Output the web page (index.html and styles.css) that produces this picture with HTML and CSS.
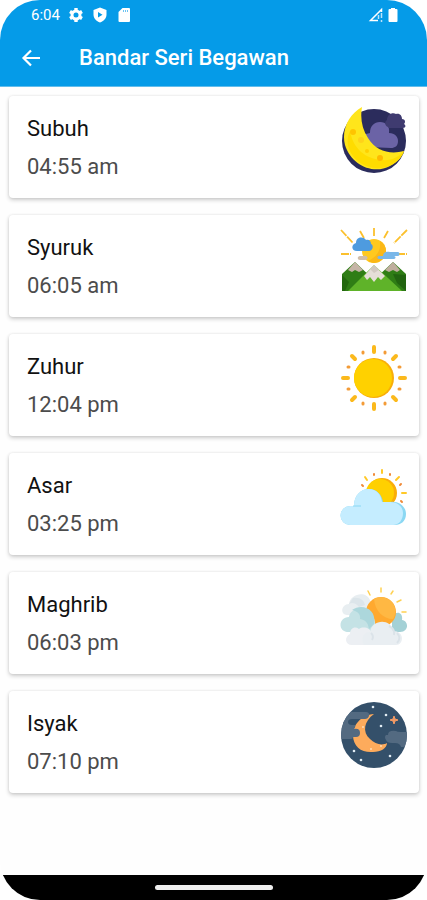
FILE: index.html
```html
<!DOCTYPE html>
<html lang="ms">
<head>
    <meta charset="utf-8">
    <meta name="viewport" content="width=device-width, initial-scale=1">
    <title>Bandar Seri Begawan</title>
    <link rel="stylesheet" href="styles.css">
</head>
<body>
    <div class="screen">
        <header class="header">
            <div class="status-bar">
                <span class="clock">6:04</span>
                <svg class="status-icon" viewBox="0 0 16 16">
                    <circle cx="8" cy="8" r="4" fill="none" stroke="#fff" stroke-width="3"/>
                    <path d="M8 1v3M8 12v3M2 4.500l2.500 1.500M11.500 10l2.500 1.500M2 11.500l2.500-1.500M11.500 6l2.500-1.500" stroke="#fff" stroke-width="3.400"/>
                </svg>
                <svg class="status-icon" viewBox="0 0 16 16">
                    <path fill="#fff" fill-rule="evenodd" d="M8 .5l6.500 2.500v4.500c0 4-3 6.800-6.500 8-3.500-1.200-6.500-4-6.500-8V3zM6 5v5.500l4.500-2.700z"/>
                </svg>
                <svg class="status-icon" viewBox="0 0 16 16">
                    <path fill="#fff" d="M6.500 1H13q1 0 1 1v12q0 1-1 1H3.500q-1 0-1-1V5z"/>
                    <path d="M7.500 3v2M9.500 3v2M11.500 3v2" stroke="#6cc3f2"/>
                </svg>
                <svg class="status-icon signal" viewBox="0 0 16 16">
                    <path d="M10 13.500H2.500L13.500 2.500V5" fill="none" stroke="#fff" stroke-width="1.500"/>
                    <path d="M13.500 6v5M13.500 13v2M10.500 8v4" stroke="#b9e2fa" stroke-width="1.500"/>
                </svg>
                <svg class="status-icon battery" viewBox="0 0 10 16">
                    <path fill="#fff" d="M3 1h4v1h1.500q1 0 1 1v11q0 1-1 1h-7q-1 0-1-1V3q0-1 1-1H3z"/>
                </svg>
            </div>
            <div class="app-bar">
                <button class="back" type="button" aria-label="Back">
                    <svg viewBox="0 0 20 20"><path d="M19 10H3M10 2.500L2.500 10l7.500 7.500" fill="none" stroke="#fff" stroke-width="2.200"/></svg>
                </button>
                <h1 class="title">Bandar Seri Begawan</h1>
            </div>
        </header>

        <main class="prayer-list">
            <section class="card">
                <div class="info">
                    <h2 class="name">Subuh</h2>
                    <p class="time">04:55 am</p>
                </div>
                <svg class="icon" viewBox="0 0 68 68">
                    <circle cx="34" cy="35" r="32" fill="#2b2c5c"/>
                    <path d="M29 41a6 6 0 0 1-3-13l4-1c0-7 4-11 10-11s10 4 9 11c6 0 9 4 9 8 0 5-3 7-7 7z" fill="#6b63a6"/>
                    <path d="M48 21c-3-1-4-5-1-7 0-5 5-8 9-6 4-1 6 2 6 5 3 0 4 3 2 5 2 1 2 4-1 4H49z" fill="#3f3b70"/>
                    <path d="M22 1C9 8 1 24 5 39c6 20 28 30 45 21 8-4 12-9 14-15-14 4-28 0-36-13-6-9-8-20-6-31z" fill="#ffe51b"/>
                    <path d="M9 43c6 16 26 24 42 16 6-3 11-8 13-14-5 6-13 10-22 9C26 53 13 43 10 25c-3 6-3 12-1 18z" fill="#ffdc00"/>
                    <circle cx="13" cy="26" r="3" fill="#ffc400"/>
                    <circle cx="21" cy="34" r="3" fill="#ffd21a"/>
                    <circle cx="40" cy="52" r="3" fill="#ffb900"/>
                    <circle cx="27" cy="45" r="2" fill="#ffd000"/>
                </svg>
            </section>

            <section class="card">
                <div class="info">
                    <h2 class="name">Syuruk</h2>
                    <p class="time">06:05 am</p>
                </div>
                <svg class="icon" viewBox="0 0 68 68">
                    <path d="M34 3v9M1 5l12 13M67 5L54 18M20 6l4 7M48 6l-4 7M1 29h10M57 29h10" fill="none" stroke="#fbc02d" stroke-width="1.800" stroke-dasharray="8 1"/>
                    <circle cx="34" cy="26" r="12" fill="#ffc91f"/>
                    <path d="M33 38a12 12 0 0 0 13-12 12 12 0 0 0-6-10c1 9-2 15-12 20z" fill="#fbb817"/>
                    <path d="M17 26c-6 0-6-7-1-8 0-6 7-7 10-3 3-1 5 1 5 4 3 1 2 7-2 7z" fill="#4e9bdf"/>
                    <path d="M20 35c-3 0-3-4 0-4h4c4-1 5 4 1 4z" fill="#d0bda8"/>
                    <path d="M39 34c-2 0-2-3 0-3h4c0-4 4-5 7-4h8c2 0 2 4 0 4h-4c2 0 2 3 0 3z" fill="#79b7e9"/>
                    <path d="M2 66V49l13-12 19 18v11z" fill="#2f7d15"/>
                    <path d="M66 66V49L53 37 34 55v11z" fill="#2f7d15"/>
                    <path d="M2 66V50l7 7-4 9z" fill="#23680e"/>
                    <path d="M66 66V50l-13-1 4 9z" fill="#226410"/>
                    <path d="M8 66l26-26 28 26z" fill="#5fb329"/>
                    <path d="M8 45l7-8 8 8-4 2-4-2-3 2z" fill="#c5b5a6"/>
                    <path d="M45 45l8-8 7 8-3 2-4-2-4 2z" fill="#bfae9d"/>
                    <path d="M24 51l10-11 11 11-4 4-3-3-4 5-4-5-3 3z" fill="#e5ded8"/>
                    <path d="M30 44l4-4 5 5-5 3z" fill="#d2c9c2"/>
                </svg>
            </section>

            <section class="card">
                <div class="info">
                    <h2 class="name">Zuhur</h2>
                    <p class="time">12:04 pm</p>
                </div>
                <svg class="icon" viewBox="0 0 68 68">
                    <g fill="none" stroke-linecap="round">
                        <path d="M34 3v5M34 60v5M3 34h5M60 34h5M12 12l3 3M53 53l3 3M12 56l3-3M53 15l3-3" stroke="#fbb91c" stroke-width="4"/>
                        <path d="M23 8v1M45 8v1M23 59v1M45 59v1M8 23h1M59 23h1M8 45h1M59 45h1" stroke="#f39b37" stroke-width="3"/>
                    </g>
                    <circle cx="34" cy="34" r="20" fill="#f9ae08"/>
                    <circle cx="33" cy="34" r="19" fill="#ffd100"/>
                </svg>
            </section>

            <section class="card">
                <div class="info">
                    <h2 class="name">Asar</h2>
                    <p class="time">03:25 pm</p>
                </div>
                <svg class="icon" viewBox="0 0 68 68">
                    <g fill="none" stroke-linecap="round" stroke-width="2">
                        <path d="M42 7v3M25 14l2 3M59 14l-3 3M62 30h4" stroke="#ffc928"/>
                        <path d="M34 11v1M50 11v1M22 22l1 1M60 22l1-1M61 38l1 1" stroke="#f08a38"/>
                    </g>
                    <circle cx="42" cy="30" r="15" fill="#f9ad08"/>
                    <circle cx="40" cy="30" r="14" fill="#ffd000"/>
                    <path d="M10 62a9 9 0 0 1 0-19h4c0-11 7-17 15-17 8 0 13 6 14 13l3 1c10-4 20 2 20 11 0 7-5 11-11 11z" fill="#8bd8f3"/>
                    <path d="M10 62a9 9 0 0 1 0-19h4c0-11 7-17 15-17 7 0 12 5 13 13h8c8 0 13 5 13 11 0 7-4 12-10 12z" fill="#c5edff"/>
                    <path d="M13 43h8" stroke="#8bd8f3"/>
                </svg>
            </section>

            <section class="card">
                <div class="info">
                    <h2 class="name">Maghrib</h2>
                    <p class="time">06:03 pm</p>
                </div>
                <svg class="icon" viewBox="0 0 68 68">
                    <path d="M28 9l2 4M41 6v4M53 9l-2 3M61 18l-4 2M66 30h-4" fill="none" stroke="#ffd152" stroke-width="1.500" stroke-linecap="round"/>
                    <path d="M7 33C-1 32 2 22 9 22c1-10 17-14 21-4l3 15z" fill="#e8eef1"/>
                    <path d="M13 16c7-1 11 2 12 7l-6 2c-3-4-7-5-10-3z" fill="#dce5ea"/>
                    <path d="M52 50V33c7-5 11-1 10 5 7 1 7 12-2 12z" fill="#a4d1d6"/>
                    <circle cx="41" cy="30" r="15" fill="#ffa92f"/>
                    <path d="M34 17c6-3 14-2 19 4 3 5 3 12 0 16-10 0-18-8-19-20z" fill="#ffb843"/>
                    <path d="M10 50C-3 51-2 35 9 35c1-10 21-14 24 0 4 4 2 15-4 15z" fill="#c4e2e5"/>
                    <path d="M12 28c10-7 25-1 22 14l-5 5c-1-6-3-9-9-10 1-5-3-8-8-9z" fill="#acd7dc"/>
                    <path d="M12 63c-7 0-8-8-2-11 0-6 5-8 9-5 4-3 12-1 12 4 9 0 9 12 2 12z" fill="#eceff3"/>
                    <path d="M24 63c-4-7 0-13 6-13 2-13 21-14 23-1 12 0 11 14 3 14z" fill="#e9eef2"/>
                    <path d="M49 44c4 2 6 5 5 9M31 51c2 2 3 4 1 7M57 51c3 3 3 7 0 10" fill="none" stroke="#dbe3e9" stroke-width="2"/>
                </svg>
            </section>

            <section class="card">
                <div class="info">
                    <h2 class="name">Isyak</h2>
                    <p class="time">07:10 pm</p>
                </div>
                <svg class="icon" viewBox="0 0 68 68">
                    <defs>
                        <clipPath id="night"><circle cx="34" cy="34" r="33"/></clipPath>
                    </defs>
                    <circle cx="34" cy="34" r="33" fill="#34506a"/>
                    <path d="M34 13C21 14 13 24 13 34c0 12 9 18 20 17 8 0 14-4 14-9-5 3-12 1-17-4-8-7-6-18 4-25z" fill="#fdab5c"/>
                    <g clip-path="url(#night)" fill="#536a81">
                        <path d="M9 11h17q4 0 3 4-1 3-4 3H12q-4 0-4 3t4 3h3q1 2-1 4 6-1 6 4 0 4-4 4h-3q0 2-2 2H0V18z"/>
                        <path d="M68 31h-7q-4 0-5-1-8-1-8 4h-2q-2 2 0 5 1 3 6 3h3q5 0 6 4h11z"/>
                    </g>
                    <path d="M54 15l1 3 3 1-3 1-1 3-1-3-3-1 3-1z" fill="#f49b65" stroke="#f49b65"/>
                    <g fill="#e2edf4">
                        <circle cx="33" cy="6" r="1.300"/>
                        <circle cx="46" cy="14" r="1.300"/>
                        <circle cx="41" cy="25" r="1.300"/>
                        <circle cx="14" cy="50" r="1.300"/>
                        <circle cx="21" cy="59" r="1.300"/>
                        <circle cx="50" cy="55" r="1.300"/>
                    </g>
                    <g fill="#ffdcb4">
                        <circle cx="23" cy="26" r="1"/>
                        <circle cx="31" cy="48" r="1"/>
                        <circle cx="41" cy="45" r="1"/>
                    </g>
                </svg>
            </section>
        </main>

        <footer class="nav-bar">
            <div class="nav-handle"></div>
        </footer>
    </div>
</body>
</html>
```
FILE: styles.css
```css
* {
    box-sizing: border-box;
}
body {
    margin: 0;
    background-color: #ffffff;
    font-family: Roboto, sans-serif;
    color: #111111;
}
.screen {
    display: flex;
    flex-direction: column;
    min-height: 100vh;
    border-radius: 40px;
    overflow: hidden;
    background-color: #fefefe;
}
.header {
    background-color: #059be8;
    color: #ffffff;
    border-bottom: 1px solid #62bdec;
}
.status-bar {
    display: flex;
    align-items: center;
    height: 30px;
    padding: 0 29px 0 31px;
    gap: 8px;
}
.clock {
    font-size: 15px;
    line-height: 20px;
}
.status-icon {
    display: block;
    width: 16px;
    height: 16px;
}
.signal {
    margin-left: auto;
}
.battery {
    width: 10px;
    margin-left: -4px;
}
.app-bar {
    display: flex;
    align-items: center;
    height: 56px;
    padding: 0 21px;
    gap: 38px;
}
.back {
    display: flex;
    padding: 0;
    border: none;
    background: none;
    cursor: pointer;
}
.back svg {
    width: 20px;
    height: 20px;
}
.title {
    margin: 0;
    font-size: 22px;
    font-weight: 500;
    line-height: 28px;
}
.prayer-list {
    display: flex;
    flex-direction: column;
    flex: 1;
    gap: 17px;
    padding: 9px 8px 16px 9px;
}
.card {
    display: flex;
    justify-content: space-between;
    align-items: flex-start;
    padding: 10px 11px 8px 18px;
    border-radius: 4px;
    background-color: #ffffff;
    box-shadow: 0 2px 4px rgba(0, 0, 0, 0.2), 0 0 3px rgba(0, 0, 0, 0.08);
}
.info {
    padding: 4px 0;
}
.name, .time {
    margin: 0;
    font-size: 22px;
    line-height: 38px;
}
.name {
    font-weight: 400;
}
.time {
    color: #4c4c4c;
}
.icon {
    display: block;
    width: 68px;
    height: 68px;
}
.nav-bar {
    display: flex;
    justify-content: center;
    align-items: center;
    height: 25px;
    background-color: #000000;
}
.nav-handle {
    width: 118px;
    height: 5px;
    border-radius: 3px;
    background-color: #eeeeee;
}
```
